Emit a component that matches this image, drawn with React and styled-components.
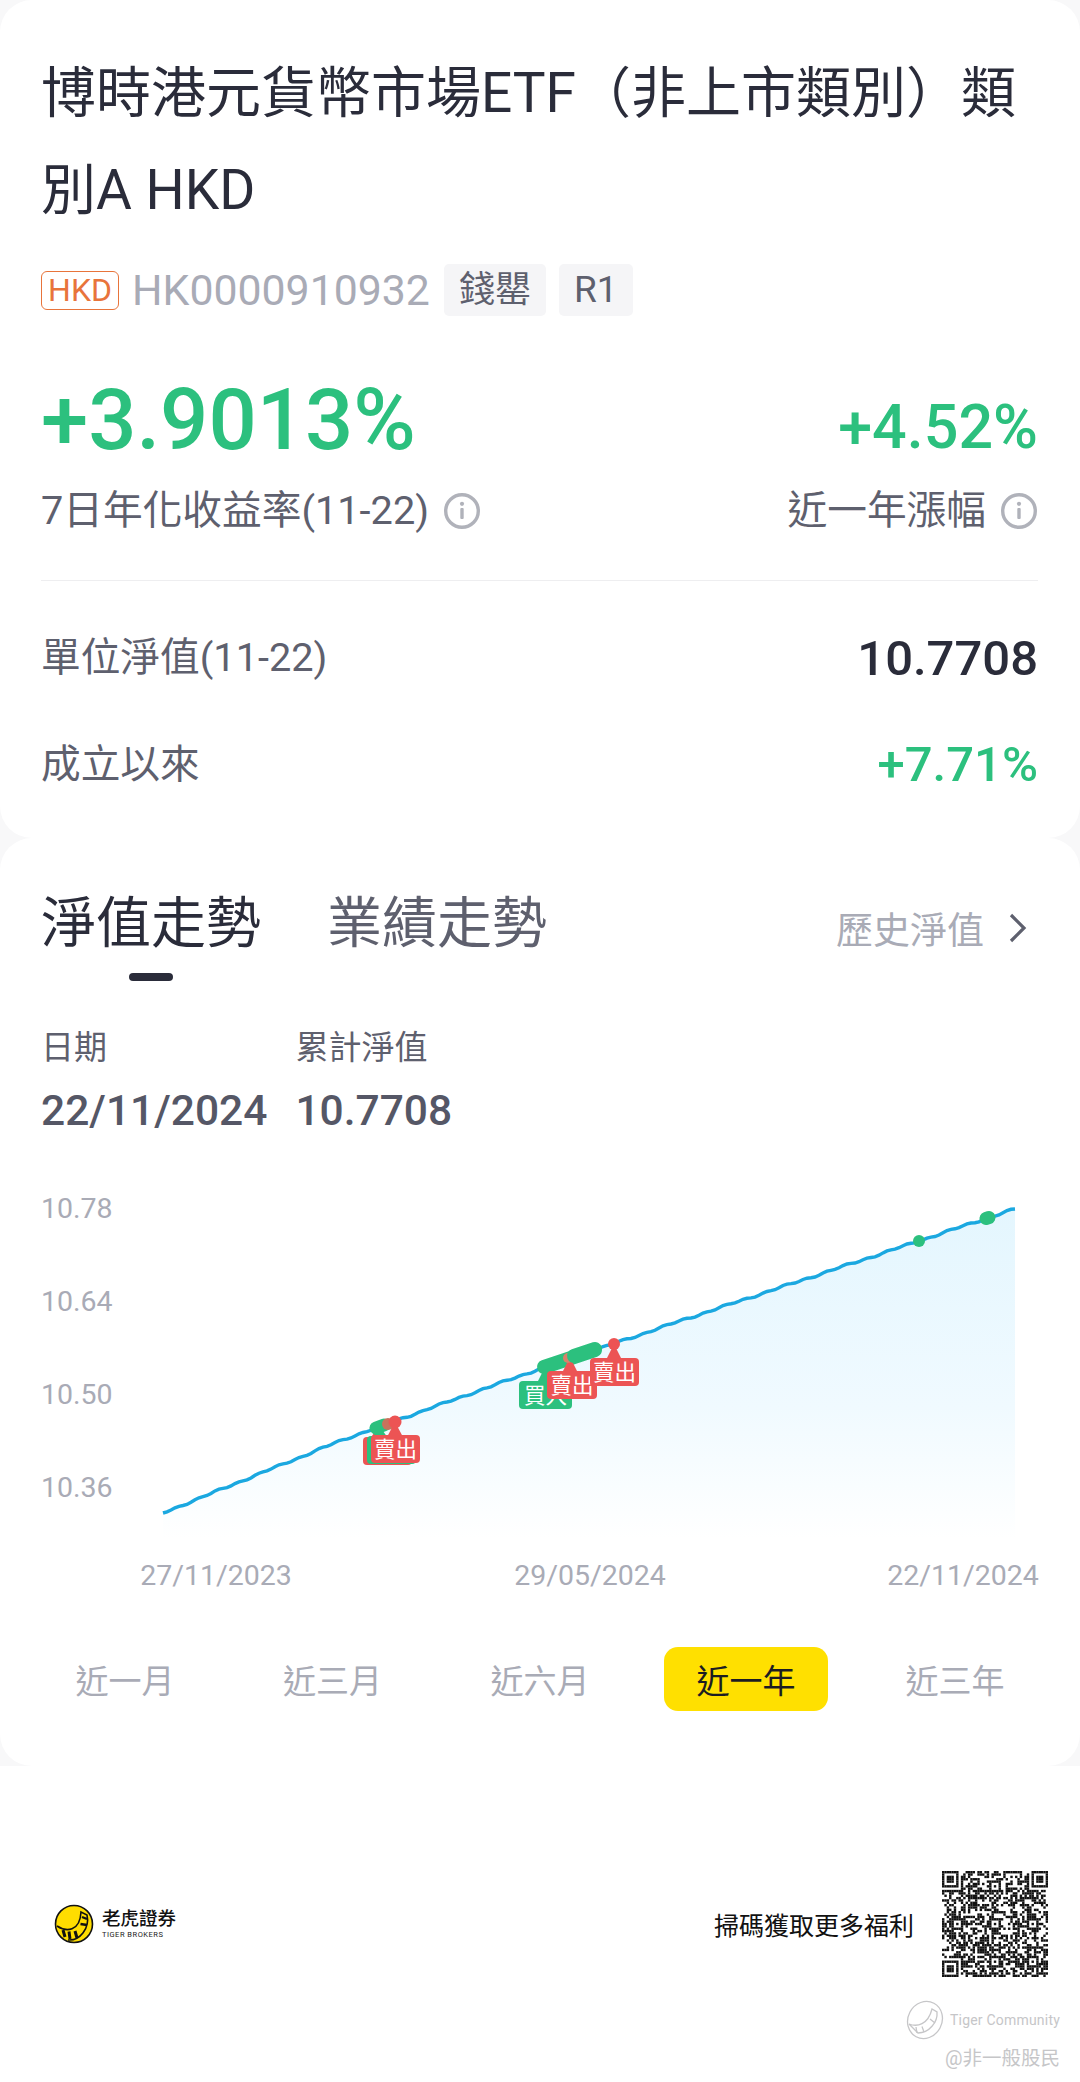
import styled, { createGlobalStyle } from "styled-components";

const CJK = `Roboto, "Noto Sans CJK TC", sans-serif`;

const GlobalStyle = createGlobalStyle`
  html, body { margin: 0; padding: 0; background: #ffffff; }
  * { box-sizing: border-box; }
  body { font-family: ${CJK}; }
`;

const Page = styled.div`
  width: 1080px;
  height: 2082px;
  background: #f8f8f9;
  overflow: hidden;
`;

const Card = styled.section`
  background: #ffffff;
  border-radius: 32px;
  height: ${(p) => p.$h}px;
  padding: 0 42px 0 41px;
`;

const Title = styled.h1`
  margin: 0;
  padding-top: 45px;
  font-size: 55px;
  line-height: 97px;
  font-weight: 400;
  color: #2a2c3a;
`;

const TagRow = styled.div`
  display: flex;
  align-items: center;
  height: 54px;
  margin-top: 24px;
`;

const CurrencyBadge = styled.span`
  width: 78px;
  height: 39px;
  border: 1.5px solid #e8743b;
  border-radius: 6px;
  color: #e8743b;
  font-size: 32px;
  line-height: 36px;
  text-align: center;
`;

const Code = styled.span`
  margin-left: 13px;
  font-size: 42.8px;
  color: #a9abb6;
`;

const Tag = styled.span`
  height: 52px;
  padding: 0 15px;
  margin-left: ${(p) => p.$gap}px;
  background: #f5f5f7;
  border-radius: 5px;
  color: #5e606e;
  font-size: ${(p) => p.$size}px;
  line-height: 52px;
`;

const StatsRow = styled.div`
  display: flex;
  justify-content: space-between;
  align-items: flex-end;
  margin-top: ${(p) => p.$top}px;
`;

const BigGreen = styled.div`
  color: #2cc07e;
  font-size: ${(p) => p.$size}px;
  line-height: ${(p) => p.$line}px;
  font-weight: 500;
`;

const Muted = styled.div`
  display: flex;
  align-items: center;
  color: #5e606e;
  font-size: 39.7px;
  line-height: 54px;
`;

const InfoMark = styled.svg`
  width: 38px;
  height: 38px;
  margin-left: 14px;
`;

const Divider = styled.div`
  height: 1px;
  margin-top: 42px;
  background: #eeeef0;
`;

const InfoRow = styled.div`
  display: flex;
  justify-content: space-between;
  align-items: center;
  height: 54px;
  margin-top: ${(p) => p.$top}px;
`;

const NavValue = styled.div`
  color: #2a2c3a;
  font-size: 49px;
  font-weight: 500;
`;

const TabBar = styled.div`
  display: flex;
  align-items: center;
  padding-top: 50px;
  height: 120px;
`;

const Tab = styled.div`
  font-size: 55px;
  line-height: 70px;
  color: ${(p) => (p.$active ? "#2a2c3a" : "#5e606e")};
  margin-right: 66px;
`;

const HistoryLink = styled.div`
  display: flex;
  align-items: center;
  margin-left: auto;
  font-size: 37px;
  color: #a9abb6;
  padding-top: 10px;
`;

const Chevron = styled.svg`
  width: 26px;
  height: 34px;
  margin-left: 20px;
  margin-right: 8px;
`;

const Indicator = styled.div`
  width: 44px;
  height: 8px;
  margin: 15px 0 0 88px;
  border-radius: 4px;
  background: #2a2c3a;
`;

const Readout = styled.div`
  display: flex;
  gap: 28px;
  margin-top: 44px;
`;

const ReadoutCol = styled.div`
  display: flex;
  flex-direction: column;
  gap: 16px;
`;

const ReadoutLabel = styled.div`
  color: #5e606e;
  font-size: 33px;
  line-height: 46px;
`;

const ReadoutValue = styled.div`
  color: #555766;
  font-size: 42.5px;
  line-height: 48px;
  font-weight: 500;
`;

const ChartWrap = styled.div`
  margin: 14px -42px 0 -41px;
`;

const ChartBox = styled.svg`
  display: block;
  width: 1080px;
  height: 450px;
`;

const RangeBar = styled.div`
  display: flex;
  justify-content: space-between;
  margin-top: 48px;
  padding-right: 3px;
`;

const RangeItem = styled.div`
  width: 164px;
  height: 64px;
  padding-left: ${(p) => (p.$active ? 1 : 4)}px;
  border-radius: 14px;
  text-align: center;
  font-size: 33px;
  line-height: 69px;
  color: ${(p) => (p.$active ? "#1c1c22" : "#a9abb6")};
  background: ${(p) => (p.$active ? "#ffe000" : "transparent")};
`;

const Footer = styled.footer`
  position: relative;
  height: 316px;
  background: #ffffff;
  padding: 105px 32px 0 54px;
`;

const FooterRow = styled.div`
  display: flex;
  align-items: center;
`;

const Brand = styled.div`
  display: flex;
  align-items: center;
  gap: 8px;
`;

const BrandName = styled.div`
  font-size: 18.5px;
  line-height: 22px;
  color: #111111;
  font-weight: 500;
`;

const BrandSub = styled.div`
  font-size: 7.5px;
  line-height: 10px;
  letter-spacing: 0.5px;
  color: #222222;
`;

const ScanText = styled.div`
  margin-left: auto;
  margin-right: 28px;
  font-size: 25px;
  color: #111111;
`;

const Watermark = styled.div`
  position: absolute;
  right: 20px;
  bottom: 11px;
  display: flex;
  flex-direction: column;
  align-items: flex-end;
  color: #c6c6c8;
`;

const WatermarkTop = styled.div`
  display: flex;
  align-items: center;
  gap: 5px;
  font-size: 14px;
  letter-spacing: 0.2px;
`;

const WatermarkName = styled.div`
  font-size: 19.5px;
  line-height: 24px;
  margin-top: 7px;
`;

// chart svg uses page coordinates through its viewBox
const knots = [
  [163, 1514], [340, 1442], [378, 1428], [542, 1369], [613, 1345],
  [680, 1322], [919, 1242], [987, 1219], [1015, 1210],
];

const linePath = () => {
  const pts = [];
  for (let x = 163; x < 1015; x += 4) {
    let i = 0;
    while (i < knots.length - 2 && x > knots[i + 1][0]) i++;
    const [x0, y0] = knots[i];
    const [x1, y1] = knots[i + 1];
    const y = y0 + ((x - x0) / (x1 - x0)) * (y1 - y0);
    const wobble = x === 163 ? 0 : Math.sin(x * 0.31) * 0.7 + Math.sin(x * 0.11) * 0.5;
    pts.push([x, y + wobble]);
  }
  pts.push([1015, 1210]);
  return pts.map(([x, y], i) => `${i ? "L" : "M"}${x} ${y.toFixed(1)}`).join(" ");
};

const Marker = ({ dotX, dotY, rectY, rectX, w = 49, text, fill }) => (
  <g>
    <path d={`M${dotX - 8} ${rectY + 2} L${dotX} ${dotY} L${dotX + 8} ${rectY + 2} Z`} fill={fill} />
    <rect x={rectX} y={rectY} width={w} height={28} rx={4} fill={fill} />
    {text && (
      <text x={rectX + w / 2} y={rectY + 22} textAnchor="middle" fontSize="21.5" fill="#fff" fontFamily={CJK}>
        {text}
      </text>
    )}
  </g>
);

const GREEN = "#2cc07e";
const RED = "#ec5454";

const Chart = () => {
  const d = linePath();
  const yLabels = [["10.78", 1209], ["10.64", 1302], ["10.50", 1395], ["10.36", 1488]];
  const xLabels = [["27/11/2023", 216], ["29/05/2024", 590], ["22/11/2024", 963]];
  return (
    <ChartBox viewBox="0 1150 1080 450">
      <defs>
        <linearGradient id="areaFill" x1="0" y1="0" x2="0" y2="1">
          <stop offset="0" stopColor="#e4f6fe" />
          <stop offset="0.6" stopColor="#f0faff" />
          <stop offset="1" stopColor="#ffffff" />
        </linearGradient>
      </defs>
      <path d={`${d} L1015 1540 L163 1540 Z`} fill="url(#areaFill)" />
      <path d={d} fill="none" stroke="#1ba8e0" strokeWidth="3.4" />
      {yLabels.map(([t, y]) => (
        <text key={t} x="41" y={y + 10} fontSize="28.5" fill="#a9abb6" fontFamily={CJK}>{t}</text>
      ))}
      {xLabels.map(([t, x]) => (
        <text key={t} x={x} y={1586} textAnchor="middle" fontSize="28.5" fill="#a9abb6" fontFamily={CJK}>{t}</text>
      ))}

      <Marker dotX={378} dotY={1428} rectX={363} rectY={1438} fill={RED} />
      <Marker dotX={380} dotY={1428} rectX={367} rectY={1437} fill={GREEN} />
      <path d="M376 1429 L384 1426" stroke={GREEN} strokeWidth="13" strokeLinecap="round" />
      <circle cx="388" cy="1425" r="6" fill="#c9725c" />
      <Marker dotX={395} dotY={1423} rectX={371} rectY={1436} text="賣出" fill={RED} />
      <circle cx="395" cy="1423" r="6.5" fill={RED} />

      <Marker dotX={545} dotY={1368} rectX={519} rectY={1382} w={53} text="買入" fill={GREEN} />
      <path d="M544 1368 L595 1351" stroke={GREEN} strokeWidth="14" strokeLinecap="round" />
      <Marker dotX={570} dotY={1358} rectX={547} rectY={1372} w={50} text="賣出" fill={RED} />
      <circle cx="568" cy="1359" r="5" fill="#d9806a" />
      <path d="M574 1357 L595 1350" stroke={GREEN} strokeWidth="14" strokeLinecap="round" />
      <Marker dotX={614} dotY={1345} rectX={590} rectY={1359} text="賣出" fill={RED} />
      <circle cx="614" cy="1345" r="6" fill={RED} />

      <circle cx="919" cy="1242" r="6" fill={GREEN} />
      <path d="M986 1219.5 L989 1218.5" stroke={GREEN} strokeWidth="13" strokeLinecap="round" />
    </ChartBox>
  );
};

const InfoIcon = () => (
  <InfoMark viewBox="0 0 38 38">
    <circle cx="19" cy="19" r="16.3" fill="none" stroke="#b0b2ba" strokeWidth="3.4" />
    <rect x="17.3" y="16" width="3.4" height="11" rx="1" fill="#b0b2ba" />
    <circle cx="19" cy="11.8" r="2.1" fill="#b0b2ba" />
  </InfoMark>
);

const QR_SIZE = 45;
const inFinder = (r, c) => (r < 8 && c < 8) || (r < 8 && c >= QR_SIZE - 8) || (r >= QR_SIZE - 8 && c < 8);

const finderOn = (r, c) => {
  const fr = r < 8 ? r : r - (QR_SIZE - 7);
  const fc = c < 8 ? c : c - (QR_SIZE - 7);
  if (fr < 0 || fc < 0 || fr > 6 || fc > 6) return false;
  return fr === 0 || fr === 6 || fc === 0 || fc === 6 || (fr >= 2 && fr <= 4 && fc >= 2 && fc <= 4);
};

const QrCode = () => {
  const cells = [];
  let seed = 20241122;
  const aligns = [6, 22, 38];
  for (let r = 0; r < QR_SIZE; r++) {
    for (let c = 0; c < QR_SIZE; c++) {
      seed = (seed * 1103515245 + 12345) & 0x7fffffff;
      let on = (seed >> 16) % 100 < 50;
      if (inFinder(r, c)) on = finderOn(r, c);
      else {
        for (const ar of aligns) for (const ac of aligns) {
          if (Math.abs(r - ar) <= 2 && Math.abs(c - ac) <= 2) {
            const dist = Math.max(Math.abs(r - ar), Math.abs(c - ac));
            on = dist !== 1;
          }
        }
      }
      if (on) cells.push(<rect key={`${r}-${c}`} x={c} y={r} width="1.02" height="1.02" />);
    }
  }
  return (
    <svg width="106" height="106" viewBox={`0 0 ${QR_SIZE} ${QR_SIZE}`} fill="#111">{cells}</svg>
  );
};

const TigerLogo = () => (
  <svg width="40" height="40" viewBox="0 0 40 40">
    <circle cx="20" cy="20" r="18.5" fill="#ffdd00" stroke="#111" strokeWidth="1.6" />
    <path d="M3 22 C12 28 26 28 27 8 L33 11 C36 24 26 37 14 36" fill="none" stroke="#111" strokeWidth="1.6" />
    <path d="M9 26 L11 33 M15 27.5 L16 35 M21 27 L23 34" stroke="#111" strokeWidth="3" />
    <path d="M26.5 20 L33 21 M28 13 L33 15" stroke="#111" strokeWidth="2.4" />
  </svg>
);

const CommunityLogo = () => (
  <svg width="40" height="40" viewBox="0 0 40 40" fill="none" stroke="#c6c6c8" strokeWidth="1.3">
    <ellipse cx="20" cy="20" rx="17" ry="19" transform="rotate(28 20 20)" />
    <path d="M4 24 C12 27 23 25 27 9 L32 12 C33 22 24 33 13 33 Z" />
    <path d="M11 27 L12 33 M17 26.5 L19 32 M25 19 L30 23" />
  </svg>
);

const ranges = ["近一月", "近三月", "近六月", "近一年", "近三年"];

const App = () => (
  <>
    <GlobalStyle />
    <Page>
      <Card $h={838}>
        <Title>博時港元貨幣市場ETF（非上市類別）類別A HKD</Title>
        <TagRow>
          <CurrencyBadge>HKD</CurrencyBadge>
          <Code>HK0000910932</Code>
          <Tag $gap={14} $size={36}>錢罌</Tag>
          <Tag $gap={13} $size={37}>R1</Tag>
        </TagRow>
        <StatsRow $top={58}>
          <BigGreen $size={85} $line={90}>+3.9013%</BigGreen>
          <BigGreen $size={61} $line={76}>+4.52%</BigGreen>
        </StatsRow>
        <StatsRow $top={19}>
          <Muted>7日年化收益率(11-22)<InfoIcon /></Muted>
          <Muted>近一年漲幅<InfoIcon /></Muted>
        </StatsRow>
        <Divider />
        <InfoRow $top={50}>
          <Muted>單位淨值(11-22)</Muted>
          <NavValue>10.7708</NavValue>
        </InfoRow>
        <InfoRow $top={53}>
          <Muted>成立以來</Muted>
          <BigGreen $size={49} $line={54}>+7.71%</BigGreen>
        </InfoRow>
      </Card>
      <Card $h={928}>
        <TabBar>
          <Tab $active>淨值走勢</Tab>
          <Tab>業績走勢</Tab>
          <HistoryLink>
            歷史淨值
            <Chevron viewBox="0 0 26 34">
              <path d="M7 4 L20 17 L7 30" fill="none" stroke="#5e606e" strokeWidth="3.2" />
            </Chevron>
          </HistoryLink>
        </TabBar>
        <Indicator />
        <Readout>
          <ReadoutCol>
            <ReadoutLabel>日期</ReadoutLabel>
            <ReadoutValue>22/11/2024</ReadoutValue>
          </ReadoutCol>
          <ReadoutCol>
            <ReadoutLabel>累計淨值</ReadoutLabel>
            <ReadoutValue>10.7708</ReadoutValue>
          </ReadoutCol>
        </Readout>
        <ChartWrap>
          <Chart />
        </ChartWrap>
        <RangeBar>
          {ranges.map((r) => (
            <RangeItem key={r} $active={r === "近一年"}>{r}</RangeItem>
          ))}
        </RangeBar>
      </Card>
      <Footer>
        <FooterRow>
          <Brand>
            <TigerLogo />
            <div>
              <BrandName>老虎證券</BrandName>
              <BrandSub>TIGER BROKERS</BrandSub>
            </div>
          </Brand>
          <ScanText>掃碼獲取更多福利</ScanText>
          <QrCode />
        </FooterRow>
        <Watermark>
          <WatermarkTop><CommunityLogo />Tiger Community</WatermarkTop>
          <WatermarkName>@非一般股民</WatermarkName>
        </Watermark>
      </Footer>
    </Page>
  </>
);

export default App;
